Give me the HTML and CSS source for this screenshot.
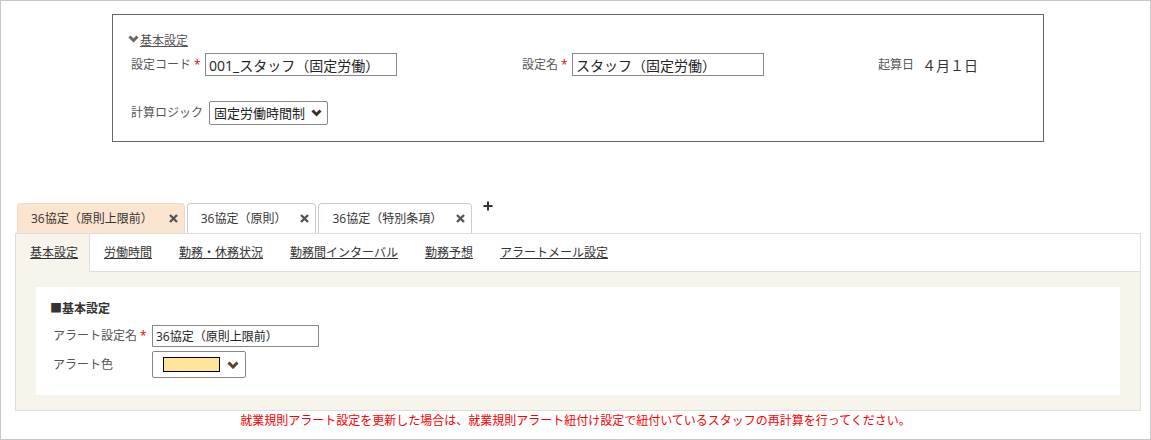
FILE: index.html
```html
<!DOCTYPE html>
<html lang="ja">

<head>
    <meta charset="UTF-8">
    <title>就業規則アラート設定</title>
    <link rel="stylesheet" href="styles.css">
</head>

<body>
    <div class="page">
        <section class="head-box">
            <a class="toggle" href="#">
                <svg class="chev" width="11" height="8" viewBox="0 0 11 8"><polyline points="1.5,1.5 5.5,5.5 9.5,1.5" /></svg>基本設定
            </a>
            <div class="head-row">
                <div class="field">
                    <label class="lbl lbl-code">設定コード<span class="req">*</span></label>
                    <input class="text text-code" type="text" value="001_スタッフ（固定労働）">
                </div>
                <div class="field">
                    <label class="lbl lbl-name">設定名<span class="req">*</span></label>
                    <input class="text text-code" type="text" value="スタッフ（固定労働）">
                </div>
                <div class="field">
                    <label class="lbl">起算日</label>
                    <span class="start-val">４月１日</span>
                </div>
            </div>
            <div class="logic-row">
                <label class="lbl">計算ロジック</label>
                <div class="fake-select logic-select">
                    <span>固定労働時間制</span>
                    <svg class="sel-chev" width="11" height="8" viewBox="0 0 11 8"><polyline points="1.5,1.5 5.5,5.5 9.5,1.5" /></svg>
                </div>
            </div>
        </section>

        <div class="tabs">
            <div class="tab active">
                <span>36協定（原則上限前）</span>
                <svg class="close" width="9" height="9" viewBox="0 0 9 9"><path d="M1 1 8 8M8 1 1 8" /></svg>
            </div>
            <div class="tab">
                <span>36協定（原則）</span>
                <svg class="close" width="9" height="9" viewBox="0 0 9 9"><path d="M1 1 8 8M8 1 1 8" /></svg>
            </div>
            <div class="tab">
                <span>36協定（特別条項）</span>
                <svg class="close" width="9" height="9" viewBox="0 0 9 9"><path d="M1 1 8 8M8 1 1 8" /></svg>
            </div>
            <svg class="add" width="10" height="10" viewBox="0 0 10 10"><path d="M5 0.5V9.5M0.5 5H9.5" /></svg>
        </div>

        <div class="panel">
            <ul class="subtabs">
                <li class="current"><a href="#">基本設定</a></li>
                <li><a href="#">労働時間</a></li>
                <li><a href="#">勤務・休務状況</a></li>
                <li><a href="#">勤務間インターバル</a></li>
                <li><a href="#">勤務予想</a></li>
                <li><a href="#">アラートメール設定</a></li>
            </ul>
            <div class="panel-body">
                <div class="card">
                    <h3>■基本設定</h3>
                    <div class="form-row">
                        <label class="lbl form-lbl">アラート設定名<span class="req">*</span></label>
                        <input class="text text-alert" type="text" value="36協定（原則上限前）">
                    </div>
                    <div class="form-row">
                        <label class="lbl form-lbl">アラート色</label>
                        <div class="fake-select color-select">
                            <span class="swatch"></span>
                            <svg class="sel-chev brown" width="12" height="8" viewBox="0 0 12 8"><polyline points="1.5,1.5 6,6 10.5,1.5" /></svg>
                        </div>
                    </div>
                </div>
            </div>
        </div>

        <p class="notice">就業規則アラート設定を更新した場合は、就業規則アラート紐付け設定で紐付いているスタッフの再計算を行ってください。</p>
    </div>
</body>

</html>
```

FILE: styles.css
```css
body {
    margin: 0;
    background-color: #fff;
    color: #333;
    font-family: 'Open Sans', 'Noto Sans CJK JP', sans-serif;
    font-size: 12px;
    line-height: 16px;
}

.page {
    box-sizing: border-box;
    width: 1151px;
    height: 440px;
    border: 1px solid #c8c8c8;
    overflow: hidden;
}

/* top settings box */
.head-box {
    box-sizing: border-box;
    width: 932px;
    height: 128px;
    margin: 13px 0 0 111px;
    padding: 16px 0 0 15px;
    border: 1px solid #666;
}

.toggle {
    display: inline-flex;
    align-items: center;
    color: #555;
    text-decoration: underline;
    font-size: 12px;
}

.chev {
    margin: 0 1px 4px 0;
}

.chev polyline,
.sel-chev polyline {
    fill: none;
    stroke: #666;
    stroke-width: 3;
}

.head-row {
    display: grid;
    grid-template-columns: 391px 356px auto;
    align-items: center;
    margin-top: 4px;
    padding-left: 3px;
}

.field {
    display: flex;
    align-items: center;
}

.lbl {
    color: #555;
    font-size: 12px;
    white-space: nowrap;
}

.lbl-code {
    width: 74px;
}

.lbl-name {
    width: 50px;
}

.req {
    color: #e00;
    margin-left: 3px;
}

.text {
    box-sizing: border-box;
    height: 23px;
    padding: 0 3px;
    border: 1px solid #888;
    border-radius: 0;
    color: #222;
    font-family: 'Open Sans', 'Noto Sans CJK JP', sans-serif;
    font-size: 14px;
    outline: none;
}

.text-code {
    width: 192px;
}

.start-val {
    margin-left: 8px;
    color: #333;
    font-size: 14px;
    font-family: 'Noto Sans CJK JP', sans-serif;
}

.logic-row {
    display: flex;
    align-items: center;
    gap: 6px;
    margin-top: 25px;
    padding-left: 3px;
}

.fake-select {
    box-sizing: border-box;
    display: flex;
    align-items: center;
    justify-content: space-between;
    border: 1px solid #888;
    border-radius: 2px;
    background-color: #fff;
}

.logic-select {
    width: 119px;
    height: 24px;
    padding: 0 5px 0 4px;
    color: #222;
    font-size: 13px;
}

.sel-chev polyline {
    stroke: #333;
}

.sel-chev.brown polyline {
    stroke: #5b4326;
}

/* agreement tabs */
.tabs {
    display: flex;
    align-items: flex-start;
    gap: 2px;
    margin: 61px 0 0 16px;
}

.tab {
    box-sizing: border-box;
    display: flex;
    align-items: center;
    height: 30px;
    padding: 0 6px 0 13px;
    border: 1px solid #ccc;
    border-bottom: none;
    border-radius: 4px 4px 0 0;
    background-color: #fff;
    color: #333;
}

.tab.active {
    background-color: #fce5d0;
    border-color: #e8dccd;
}

.tab span {
    margin-right: 14px;
}

.tab.active span {
    margin-right: 16px;
}

.close path {
    stroke: #555;
    stroke-width: 2.4;
}

.add {
    margin: -2px 0 0 9px;
}

.add path {
    stroke: #333;
    stroke-width: 2;
}

/* panel */
.panel {
    width: 1126px;
    box-sizing: border-box;
    margin-left: 14px;
    border: 1px solid #ddd;
}

.subtabs {
    display: flex;
    height: 37px;
    margin: 0;
    padding: 0;
    list-style: none;
    border-bottom: 1px solid #ddd;
    background-color: #fff;
}

.subtabs li {
    display: flex;
    align-items: center;
    padding: 0 12px 0 14px;
    border-right: 1px solid transparent;
}

.subtabs li.current {
    height: 38px;
    padding-right: 11px;
    background-color: #f7f5eb;
    border-right-color: #ddd;
}

.subtabs a {
    color: #333;
    text-decoration: underline;
}

.panel-body {
    padding: 15px 20px 15px 20px;
    background-color: #f7f5eb;
}

.card {
    padding: 14px 0 17px 14px;
    background-color: #fff;
}

.card h3 {
    margin: 0 0 8px;
    color: #333;
    font-size: 12px;
    line-height: 16px;
    font-weight: bold;
}

.form-row {
    display: flex;
    align-items: center;
    padding-left: 3px;
}

.form-row + .form-row {
    margin-top: 4px;
}

.form-lbl {
    width: 99px;
}

.text-alert {
    width: 167px;
    height: 22px;
    font-size: 12px;
}

.color-select {
    width: 94px;
    height: 27px;
    padding: 0 6px 0 10px;
}

.swatch {
    box-sizing: border-box;
    width: 57px;
    height: 15px;
    border: 1px solid #000;
    background-color: #ffe599;
}

.notice {
    margin: 2px 0 0;
    color: #f00;
    text-align: center;
    font-size: 12px;
}
```
